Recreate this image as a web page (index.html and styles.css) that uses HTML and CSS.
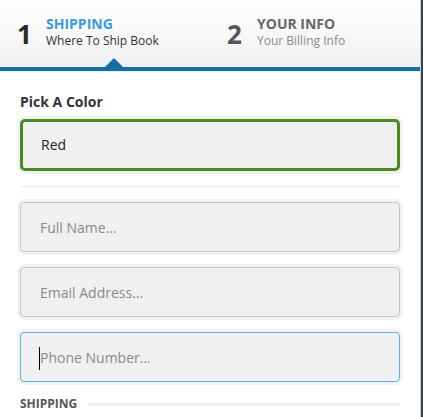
FILE: index.html
```html
<!DOCTYPE html>
<html>
<head>
<meta charset="utf-8">
<link rel="stylesheet" href="styles.css">
</head>
<body>
<div class="panel">
  <div class="steps">
    <div class="step active">
      <span class="step-num">1</span>
      <div class="step-text">
        <div class="step-title">SHIPPING</div>
        <div class="step-sub">Where To Ship Book</div>
      </div>
      <span class="step-arrow"></span>
    </div>
    <div class="step">
      <span class="step-num">2</span>
      <div class="step-text">
        <div class="step-title">YOUR INFO</div>
        <div class="step-sub">Your Billing Info</div>
      </div>
    </div>
  </div>
  <div class="step-bar"></div>
  <div class="content">
    <div class="field-label">Pick A Color</div>
    <div class="select">Red</div>
    <div class="divider"></div>
    <input class="input" type="text" placeholder="Full Name...">
    <input class="input" type="text" placeholder="Email Address...">
    <div class="input-wrap">
      <input class="input focused" type="text" placeholder="Phone Number...">
      <span class="caret"></span>
    </div>
    <div class="section">
      <span class="section-label">SHIPPING</span>
      <span class="section-line"></span>
    </div>
  </div>
</div>
</body>
</html>
```
FILE: styles.css
```css
html, body {
  margin: 0;
  padding: 0;
  height: 100%;
}
body {
  background: #34444f;
  font-family: "Open Sans", "Liberation Sans", sans-serif;
  overflow: hidden;
}
.panel {
  width: 420px;
  min-height: 100%;
  background: #fff;
  border-right: 1px solid #cfcfcf;
}
.steps {
  display: flex;
  height: 67px;
  background: linear-gradient(#ffffff, #f1f1f1);
  box-sizing: border-box;
  padding-top: 15px;
}
.step {
  position: relative;
  width: 210px;
  box-sizing: border-box;
  padding-left: 17px;
  display: flex;
  align-items: flex-start;
}
.step-num {
  width: 29px;
  font-size: 26px;
  font-weight: 700;
  line-height: 34px;
  color: #555;
  margin-top: 2px;
}
.step + .step .step-num {
  width: 30px;
}
.step.active .step-num {
  color: #2a2a2a;
}
.step-title {
  font-size: 14px;
  font-weight: 700;
  line-height: 18px;
  color: #666;
}
.step.active .step-title {
  color: #3a9be0;
}
.step-sub {
  font-size: 12px;
  line-height: 16px;
  color: #8a8a8a;
}
.step.active .step-sub {
  color: #333;
}
.step-arrow {
  position: absolute;
  left: 105px;
  bottom: 0;
  width: 0;
  height: 0;
  border-left: 9px solid transparent;
  border-right: 9px solid transparent;
  border-bottom: 9px solid #1670a5;
}
.step-bar {
  height: 4px;
  background: #1670a5;
  border-bottom: 1px solid #eeeeee;
}
.content {
  padding: 21px 20px 0;
}
.field-label {
  font-size: 14px;
  font-weight: 700;
  line-height: 18px;
  color: #333;
}
.select {
  margin-top: 8px;
  height: 52px;
  box-sizing: border-box;
  border: 3px solid #4a8a1e;
  border-radius: 5px;
  background: #f0f0f0;
  box-shadow: 0 0 0 3px #f2f2f2;
  padding-left: 18px;
  font-size: 14px;
  line-height: 46px;
  color: #222;
}
.divider {
  margin-top: 15px;
  height: 1px;
  background: #ebebeb;
}
.input {
  display: block;
  width: 100%;
  height: 50px;
  box-sizing: border-box;
  margin: 15px 0 0;
  border: 1px solid #c6c6c6;
  border-radius: 4px;
  background: #f0f0f0;
  box-shadow: 0 0 0 3px #f3f3f3;
  padding: 0 0 0 19px;
  font-family: "Open Sans", "Liberation Sans", sans-serif;
  font-size: 14px;
  color: #333;
  outline: none;
}
.input::placeholder {
  color: #8a8a8a;
}
.input.focused {
  border-color: #5ab2e6;
}
.input-wrap {
  position: relative;
}
.caret {
  position: absolute;
  left: 19px;
  top: 15px;
  width: 1px;
  height: 23px;
  background: #000;
}
.section {
  display: flex;
  align-items: center;
  margin-top: 14px;
}
.section-label {
  font-size: 12px;
  font-weight: 700;
  line-height: 16px;
  color: #555;
}
.section-line {
  flex: 1;
  height: 3px;
  margin-left: 11px;
  background: #efefef;
}
```
